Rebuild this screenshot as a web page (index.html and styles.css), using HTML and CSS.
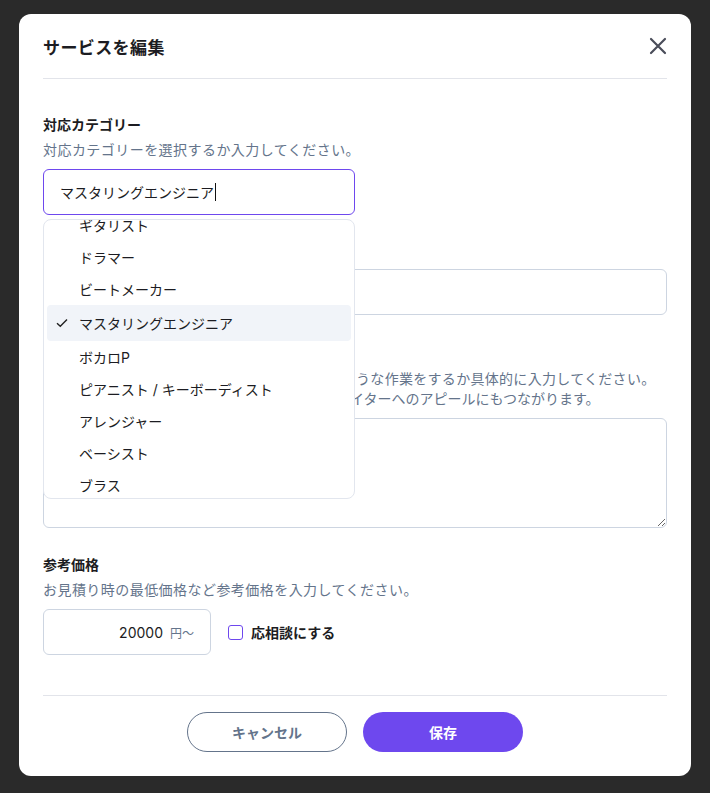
FILE: index.html
```html
<!DOCTYPE html>
<html lang="ja">
  <head>
    <meta charset="UTF-8" />
    <title>サービスを編集</title>
    <link rel="stylesheet" href="styles.css">
  </head>
  <body>
    <div class="modal">
      <div class="modal-header">
        <h2>サービスを編集</h2>
        <button class="close-btn" aria-label="閉じる">
          <svg width="18" height="18" viewBox="0 0 18 18">
            <path d="M2 2 L16 16 M16 2 L2 16" stroke="#4a4d5a" stroke-width="2.2" stroke-linecap="round" fill="none" />
          </svg>
        </button>
      </div>

      <div class="modal-body">
        <div class="field">
          <div class="label">対応カテゴリー</div>
          <div class="help">対応カテゴリーを選択するか入力してください。</div>
          <div class="combo">
            <div class="input input-focus">マスタリングエンジニア<span class="caret"></span></div>
            <div class="dropdown">
              <ul class="options">
                <li>ギタリスト</li>
                <li>ドラマー</li>
                <li>ビートメーカー</li>
                <li class="selected">
                  <svg class="check" width="12" height="10" viewBox="0 0 12 10">
                    <path d="M1 5.2 L4.3 8.3 L11 1.5" stroke="#222" stroke-width="1.4" fill="none" />
                  </svg>
                  マスタリングエンジニア
                </li>
                <li>ボカロP</li>
                <li>ピアニスト / キーボーディスト</li>
                <li>アレンジャー</li>
                <li>ベーシスト</li>
                <li>ブラス</li>
              </ul>
            </div>
          </div>
        </div>

        <div class="field">
          <div class="label">サービス名</div>
          <div class="input"></div>
        </div>

        <div class="field field-tight">
          <div class="label">サービス内容</div>
          <div class="help">
            <div class="help-mid">対応カテゴリーにおいて、依頼者に対してどのような作業をするか具体的に入力してください。</div>
            <div class="help-narrow">サービスの内容を詳しく書くことで、他のクリエイターへのアピールにもつながります。</div>
          </div>
          <textarea class="textarea"></textarea>
        </div>

        <div class="field">
          <div class="label">参考価格</div>
          <div class="help">お見積り時の最低価格など参考価格を入力してください。</div>
          <div class="price-row">
            <div class="input price-input">
              <span class="price-value">20000</span>
              <span class="price-unit">円〜</span>
            </div>
            <label class="checkbox">
              <span class="box"></span>
              応相談にする
            </label>
          </div>
        </div>
      </div>

      <div class="modal-footer">
        <button class="btn btn-cancel">キャンセル</button>
        <button class="btn btn-save">保存</button>
      </div>
    </div>
  </body>
</html>
```

FILE: styles.css
```css
body {
  margin: 0;
  padding: 14px 19px 17px;
  background: #2a2a2a;
  font-family: Inter, "Noto Sans CJK JP", sans-serif;
  color: #1c1c22;
}
.modal {
  background: #fff;
  border-radius: 12px;
  padding: 0 24px 24px;
  height: 762px;
  box-sizing: border-box;
  display: flex;
  flex-direction: column;
}
.modal-header {
  height: 64px;
  display: flex;
  align-items: center;
  justify-content: space-between;
  border-bottom: 1px solid #e2e4ea;
}
.modal-header h2 {
  margin: 0;
  font-size: 17px;
  font-weight: 700;
  letter-spacing: 0.4px;
}
.close-btn {
  border: none;
  background: none;
  padding: 0;
  margin-right: -3px;
  width: 24px;
  height: 24px;
  display: flex;
  align-items: center;
  justify-content: center;
}
.modal-body {
  flex: 1;
  padding-top: 36px;
}
.field {
  margin-bottom: 29px;
}
.field-tight {
  margin-bottom: 27px;
}
.label {
  font-size: 14px;
  font-weight: 700;
  line-height: 20px;
  margin-bottom: 5px;
}
.help {
  font-size: 14px;
  line-height: 20px;
  color: #64748b;
  letter-spacing: 0.45px;
  margin-bottom: 9px;
  white-space: nowrap;
}
.help-mid {
  letter-spacing: 0.3px;
}
.help-narrow {
  letter-spacing: 0;
}
.input {
  height: 46px;
  box-sizing: border-box;
  border: 1px solid #cdd5e1;
  border-radius: 6px;
  display: flex;
  align-items: center;
  padding: 0 16px;
  font-size: 14px;
}
.combo {
  position: relative;
  width: 312px;
}
.input-focus {
  border-color: #6e48ee;
}
.caret {
  display: inline-block;
  width: 1px;
  height: 18px;
  background: #111;
  margin-left: 1px;
}
.dropdown {
  position: absolute;
  top: 50px;
  left: 0;
  right: 0;
  height: 280px;
  box-sizing: border-box;
  background: #fff;
  border: 1px solid #e2e6ee;
  border-radius: 8px;
  overflow: hidden;
  z-index: 10;
}
.options {
  list-style: none;
  margin: -11px 0 0;
  padding: 0 3px;
}
.options li {
  height: 32px;
  display: flex;
  align-items: center;
  padding-left: 32px;
  font-size: 14px;
  position: relative;
}
.options li.selected {
  height: 36px;
  background: #f1f4f9;
  border-radius: 4px;
}
.check {
  position: absolute;
  left: 9px;
  top: 13px;
}
.textarea {
  display: block;
  width: 100%;
  height: 110px;
  box-sizing: border-box;
  border: 1px solid #cdd5e1;
  border-radius: 6px;
  font-family: inherit;
  margin: 0;
}
.price-row {
  display: flex;
  align-items: center;
  gap: 17px;
}
.price-input {
  width: 168px;
  justify-content: flex-end;
  padding-right: 16px;
}
.price-value {
  font-size: 14px;
  color: #1c1c22;
}
.price-unit {
  font-size: 12px;
  color: #64748b;
  margin-left: 7px;
}
.checkbox {
  display: flex;
  align-items: center;
  gap: 8px;
  font-size: 14px;
  font-weight: 600;
}
.box {
  width: 13px;
  height: 13px;
  border: 1.5px solid #6e48ee;
  border-radius: 3px;
}
.modal-footer {
  border-top: 1px solid #e2e4ea;
  padding-top: 16px;
  display: flex;
  justify-content: center;
  gap: 16px;
}
.btn {
  width: 160px;
  height: 40px;
  border-radius: 20px;
  font-family: inherit;
  font-size: 14px;
  font-weight: 700;
  cursor: pointer;
}
.btn-cancel {
  background: #fff;
  border: 1px solid #64748b;
  color: #64748b;
}
.btn-save {
  background: #6e48ee;
  border: none;
  color: #fff;
}
```
